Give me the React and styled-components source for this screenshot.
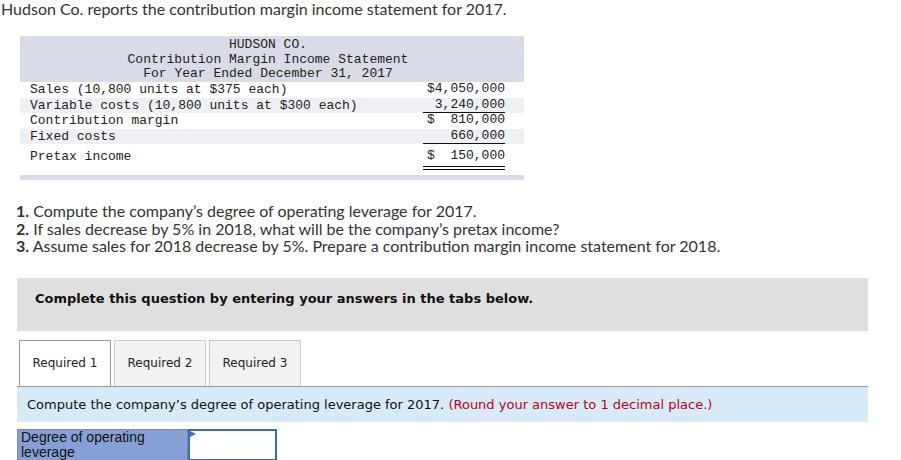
import React from "react"
import styled, { createGlobalStyle } from "styled-components"

const rows = [
  { label: "Sales (10,800 units at $375 each)", value: "$4,050,000" },
  { label: "Variable costs (10,800 units at $300 each)", value: "3,240,000", line: "single" },
  { label: "Contribution margin", value: "$  810,000" },
  { label: "Fixed costs", value: "660,000", line: "single" },
  { label: "Pretax income", value: "$  150,000", line: "double", tall: true },
]

const questions = [
  ["1.", "Compute the company’s degree of operating leverage for 2017."],
  ["2.", "If sales decrease by 5% in 2018, what will be the company’s pretax income?"],
  ["3.", "Assume sales for 2018 decrease by 5%. Prepare a contribution margin income statement for 2018."],
]

const tabs = ["Required 1", "Required 2", "Required 3"]

export default function App() {
  return (
    <Page>
      <GlobalStyle />
      <Intro>Hudson Co. reports the contribution margin income statement for 2017.</Intro>

      <Statement>
        <StatementHead>
          <div>HUDSON CO.</div>
          <div>Contribution Margin Income Statement</div>
          <div>For Year Ended December 31, 2017</div>
        </StatementHead>
        {rows.map((r, i) => (
          <Row key={r.label} $shaded={i % 2 === 1} $tall={r.tall}>
            <Label>{r.label}</Label>
            <Amount $line={r.line}>{r.value}</Amount>
          </Row>
        ))}
        <StatementFoot />
      </Statement>

      <Questions>
        {questions.map(([n, q]) => (
          <li key={n}>
            <b>{n}</b> {q}
          </li>
        ))}
      </Questions>

      <Notice>Complete this question by entering your answers in the tabs below.</Notice>

      <TabBar>
        {tabs.map((t, i) => (
          <Tab key={t} $active={i === 0}>
            {t}
          </Tab>
        ))}
      </TabBar>

      <Instruction>
        Compute the company’s degree of operating leverage for 2017.{" "}
        <Hint>(Round your answer to 1 decimal place.)</Hint>
      </Instruction>

      <AnswerRow>
        <AnswerLabel>Degree of operating leverage</AnswerLabel>
        <AnswerInput>
          <Marker viewBox="0 0 6 6">
            <path d="M0 0 L6 3 L0 6 Z" fill="#3b6fd0" />
          </Marker>
        </AnswerInput>
      </AnswerRow>
    </Page>
  )
}

const GlobalStyle = createGlobalStyle`
  body {
    margin: 0;
    background: #fff;
    color: #222;
  }
`

const Page = styled.div`
  width: 901px;
  height: 460px;
  overflow: hidden;
`

const Intro = styled.p`
  margin: 0 0 0 1px;
  font-family: Lato, "Open Sans", sans-serif;
  font-size: 16px;
  line-height: 18px;
  color: #333;
`

const Statement = styled.div`
  margin: 18px 0 0 20px;
  width: 504px;
  font-family: "Liberation Mono", "Courier New", monospace;
  font-size: 13px;
  color: #222;
`

const StatementHead = styled.div`
  background: #d9dce7;
  padding: 2px 8px 0 0;
  line-height: 14.6px;
  text-align: center;
  height: 44px;
`

const Row = styled.div`
  display: flex;
  align-items: ${(p) => (p.$tall ? "center" : "flex-start")};
  height: ${(p) => (p.$tall ? "24px" : "15.5px")};
  line-height: 15px;
  background: ${(p) => (p.$shaded ? "#eff0f4" : "#fff")};
  padding-left: 10px;
`

const Label = styled.span`
  flex: 1;
  white-space: pre;
`

const Amount = styled.span`
  width: 82px;
  margin-right: 19px;
  text-align: right;
  white-space: pre;
  line-height: 14px;
  border-bottom: ${(p) =>
    p.$line === "double" ? "4px double #111" : p.$line === "single" ? "1px solid #111" : "1px solid transparent"};
  padding-bottom: ${(p) => (p.$line === "double" ? "3px" : "0")};
  margin-top: ${(p) => (p.$line === "double" ? "6px" : "0")};
`

const StatementFoot = styled.div`
  margin-top: 7px;
  height: 5px;
  background: #d9dce7;
`

const Questions = styled.ol`
  list-style: none;
  margin: 22px 0 0 16px;
  padding: 0;
  font-family: Lato, "Open Sans", sans-serif;
  font-size: 16px;
  line-height: 17.5px;
  color: #333;

  b {
    font-weight: 700;
  }
`

const Notice = styled.div`
  margin: 23px 0 0 17px;
  width: 851px;
  height: 53px;
  box-sizing: border-box;
  padding: 13px 18px 0;
  background: #dfdfdf;
  font-family: "DejaVu Sans", Verdana, sans-serif;
  font-size: 13px;
  font-weight: 700;
  color: #111;
`

const TabBar = styled.div`
  display: flex;
  gap: 3px;
  margin: 9px 0 0 19px;
`

const Tab = styled.div`
  width: 92px;
  height: 46px;
  box-sizing: border-box;
  display: flex;
  align-items: center;
  justify-content: center;
  border: 1px solid ${(p) => (p.$active ? "#999" : "#c8c8c8")};
  border-bottom: none;
  background: ${(p) => (p.$active ? "#fff" : "#f2f2f2")};
  font-family: "DejaVu Sans", Verdana, sans-serif;
  font-size: 12px;
  color: #222;
  margin-bottom: ${(p) => (p.$active ? "-1px" : "0")};
  position: relative;
`

const Instruction = styled.div`
  margin-left: 17px;
  width: 851px;
  height: 36px;
  box-sizing: border-box;
  border-top: 1px solid #999;
  background: #d6eaf8;
  padding: 10px 10px 0;
  font-family: "DejaVu Sans", Verdana, sans-serif;
  font-size: 13px;
  color: #111;
`

const Hint = styled.span`
  color: #c0001a;
`

const AnswerRow = styled.div`
  display: flex;
  margin: 7px 0 0 17px;
  height: 32px;
`

const AnswerLabel = styled.div`
  width: 171px;
  box-sizing: border-box;
  background: #86a0d6;
  border: 1px solid #7a8ab0;
  padding: 0 3px;
  font-family: "Liberation Sans", Arial, sans-serif;
  font-size: 14px;
  line-height: 15px;
  color: #111;
`

const AnswerInput = styled.div`
  width: 89px;
  box-sizing: border-box;
  background: #fff;
  border: 2px solid #3a6bc0;
  position: relative;
`

const Marker = styled.svg`
  position: absolute;
  top: 0;
  left: 0;
  width: 6px;
  height: 6px;
`
